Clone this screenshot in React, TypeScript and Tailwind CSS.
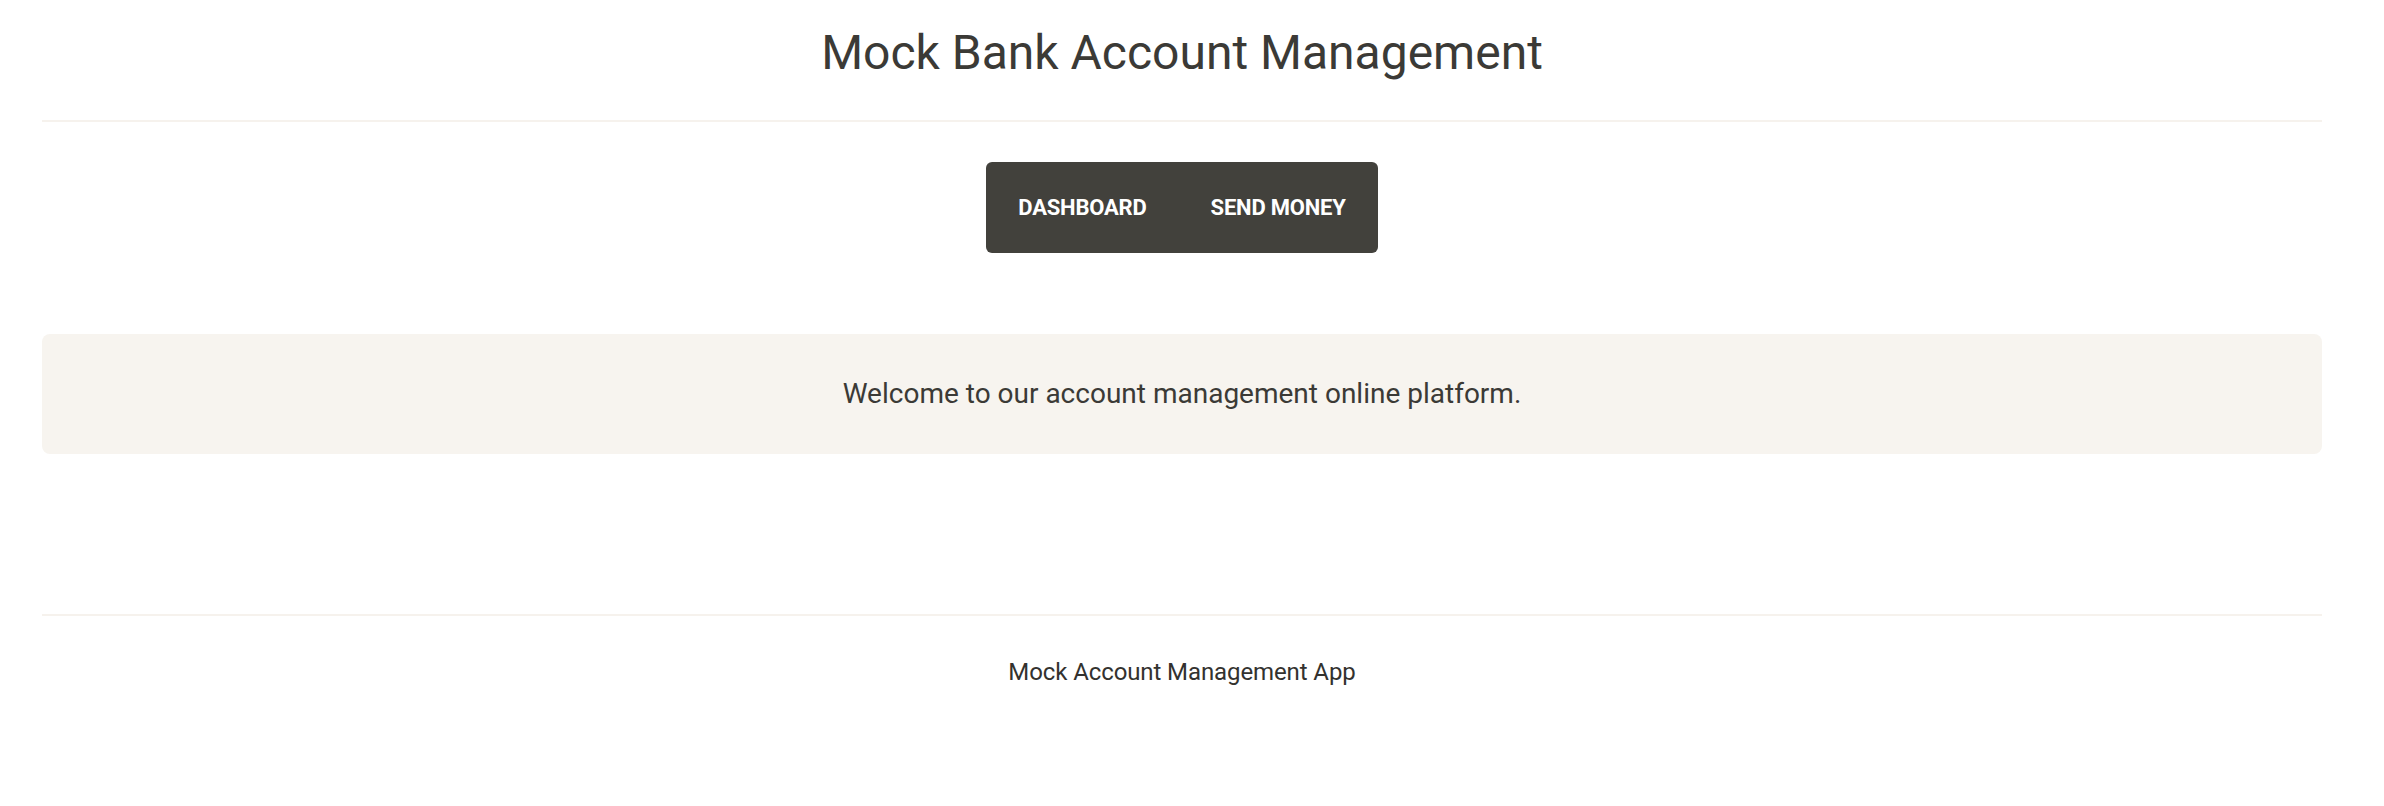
export default function App() {
  return (
    <div className="bg-white min-h-[806px] font-['Roboto','Liberation_Sans',sans-serif] text-[#3b3a36]">
      <div className="ml-[42px] w-[2280px] flex flex-col">
        <h1 className="pt-[22px] text-[48px] leading-[61px] text-center font-normal text-[#3b3a36]">
          Mock Bank Account Management
        </h1>
        <div className="mt-[37px] h-[2px] bg-[#f6f2ed]" />
        <div className="mt-[40px] flex justify-center">
          <nav className="h-[91px] w-[392px] rounded-[6px] bg-[#42413c] flex items-center justify-center">
            <a className="px-[32px] text-[22px] font-bold text-white tracking-[-0.2px]">DASHBOARD</a>
            <a className="px-[32px] text-[22px] font-bold text-white tracking-[-0.2px]">SEND MONEY</a>
          </nav>
        </div>
        <div className="mt-[81px] h-[120px] rounded-[8px] bg-[#f7f4ef] flex items-center justify-center">
          <p className="text-[28px]">Welcome to our account management online platform.</p>
        </div>
        <div className="mt-[160px] h-[2px] bg-[#f6f2ed]" />
        <footer className="pt-[42px] text-center text-[24px] leading-[28px] tracking-[-0.1px] text-[#33322f]">
          Mock Account Management App
        </footer>
      </div>
    </div>
  );
}
